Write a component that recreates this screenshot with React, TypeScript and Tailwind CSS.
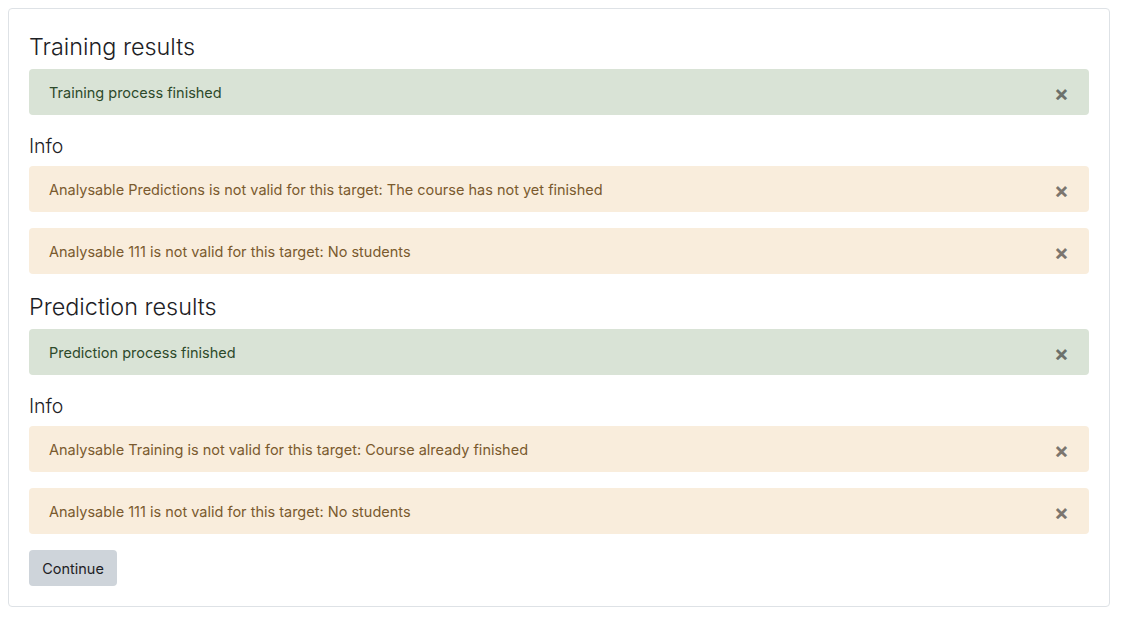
import React from "react";

type Kind = "success" | "warning";

const alertStyles: Record<Kind, string> = {
  success: "bg-[#d9e3d6] text-[#2d4a2b]",
  warning: "bg-[#f9eddc] text-[#7a5a2e]",
};

function Alert({ kind, children }: { kind: Kind; children: React.ReactNode }) {
  return (
    <div
      className={`relative mb-4 flex h-[46px] items-center rounded px-5 pt-[2px] text-[14.5px] leading-[22px] ${alertStyles[kind]}`}
    >
      <span>{children}</span>
      <button
        className="absolute right-[20px] top-1/2 -translate-y-[45%] text-[22px] font-bold leading-none text-[#000000]/50"
        aria-label="Close"
      >
        ×
      </button>
    </div>
  );
}

function Section({
  title,
  done,
  info,
  first,
}: {
  title: string;
  done: string;
  info: string[];
  first?: boolean;
}) {
  return (
    <div>
      <h3
        className={`mb-[8px] pt-[3px] text-[23.4px] font-light leading-[28px] text-[#1d2125] ${first ? "mt-[1px]" : ""}`}
      >
        {title}
      </h3>
      <Alert kind="success">{done}</Alert>
      <h4 className="mb-[7px] pt-[2px] text-[19.5px] font-light leading-[26px] text-[#1d2125]">
        Info
      </h4>
      {info.map((t) => (
        <Alert key={t} kind="warning">
          {t}
        </Alert>
      ))}
    </div>
  );
}

export default function App() {
  return (
    <div className="min-h-screen bg-white p-2 font-['Inter',sans-serif]">
      <div className="w-[1102px] rounded border border-[#dee2e6] p-5">
        <Section
          first
          title="Training results"
          done="Training process finished"
          info={[
            "Analysable Predictions is not valid for this target: The course has not yet finished",
            "Analysable 111 is not valid for this target: No students",
          ]}
        />
        <Section
          title="Prediction results"
          done="Prediction process finished"
          info={[
            "Analysable Training is not valid for this target: Course already finished",
            "Analysable 111 is not valid for this target: No students",
          ]}
        />
        <button className="h-9 w-[88px] rounded bg-[#ced4da] pt-[1px] text-[14.5px] text-[#1d2125]">
          Continue
        </button>
      </div>
    </div>
  );
}
